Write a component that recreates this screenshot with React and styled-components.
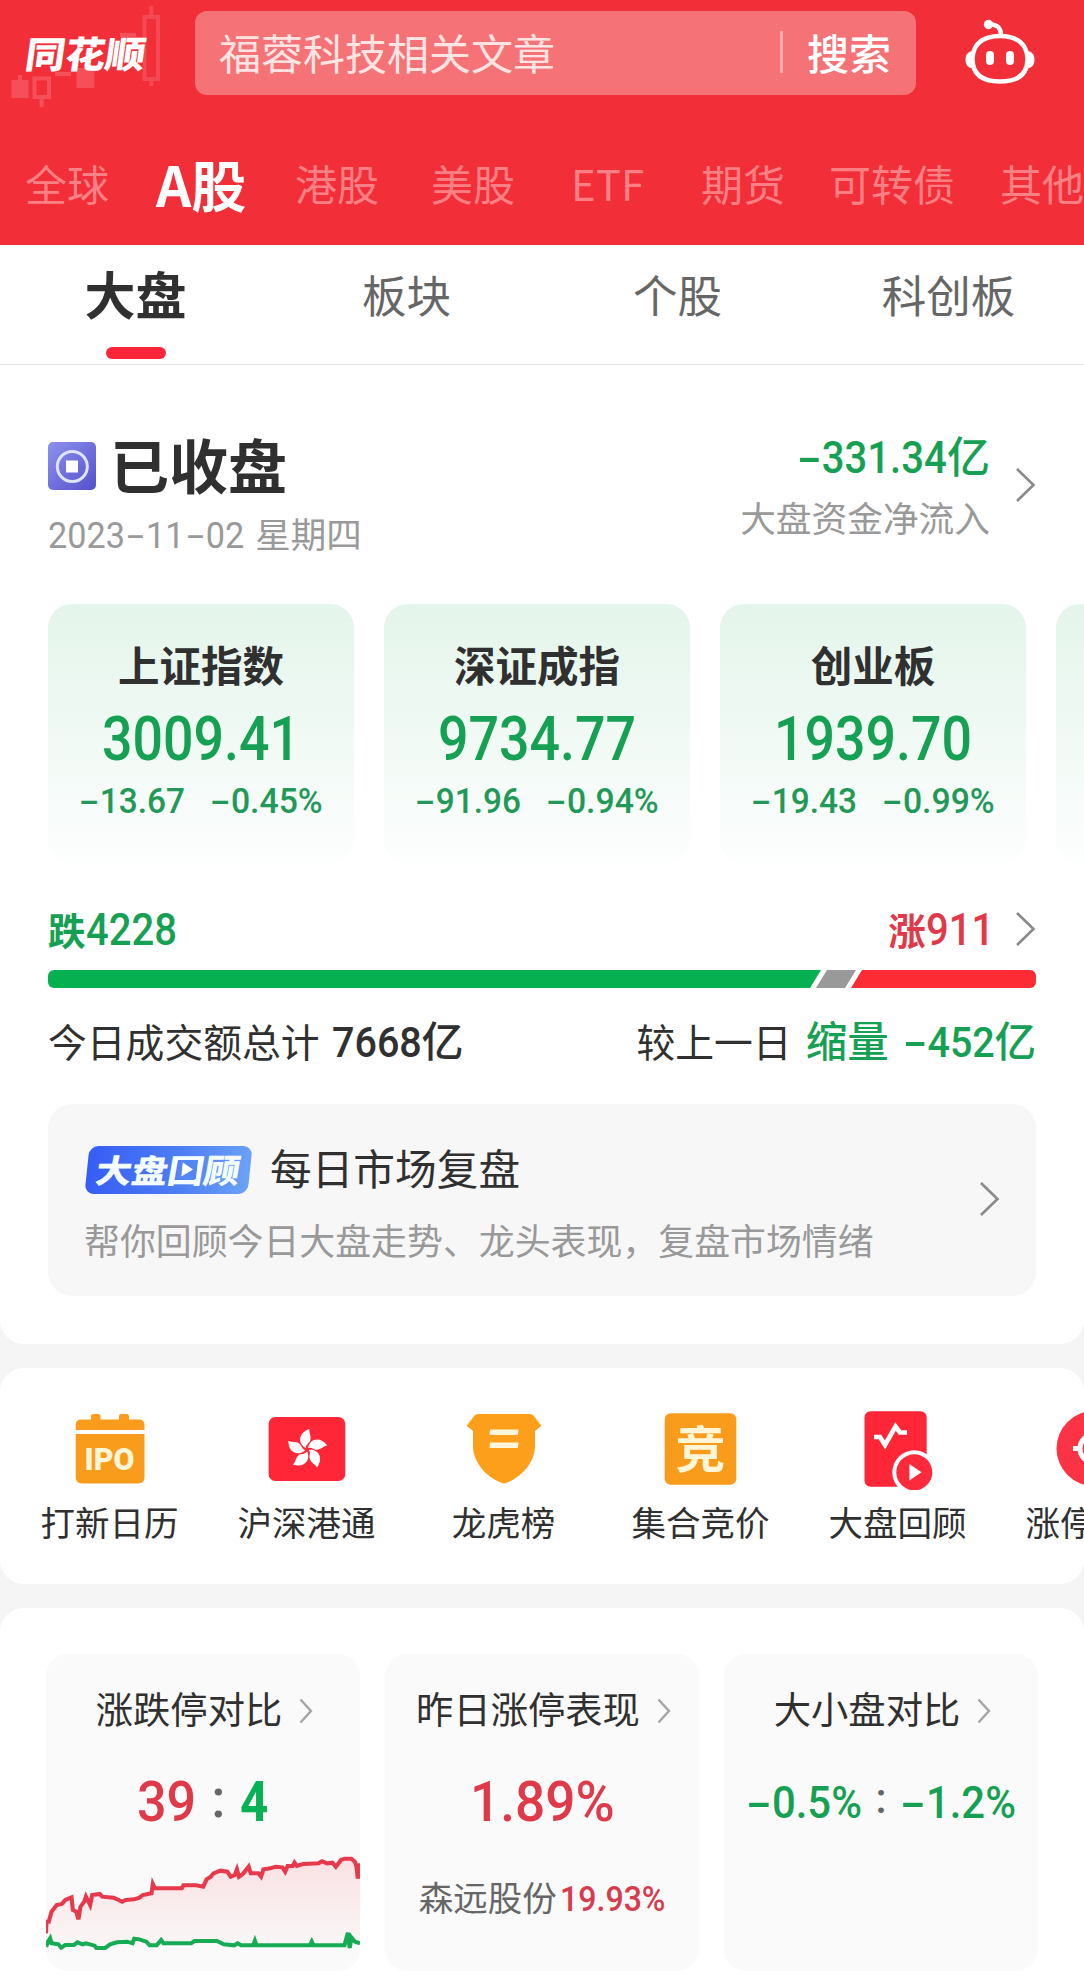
import React from "react";
import styled, { createGlobalStyle } from "styled-components";

const GREEN = "#16a053";
const RED = "#e0394a";

const TABS = [
  { name: "全球", width: 131 },
  { name: "A股", width: 139, active: true },
  { name: "港股", width: 136 },
  { name: "美股", width: 140 },
  { name: "ETF", width: 130 },
  { name: "期货", width: 128 },
  { name: "可转债", width: 171 },
  { name: "其他", width: 90 },
];

const SUB_TABS = ["大盘", "板块", "个股", "科创板"];

const INDEXES = [
  { name: "上证指数", value: "3009.41", diff: "-13.67", rate: "-0.45%" },
  { name: "深证成指", value: "9734.77", diff: "-91.96", rate: "-0.94%" },
  { name: "创业板", value: "1939.70", diff: "-19.43", rate: "-0.99%" },
];

const RISE_LINE =
  "134,1000 135,965 142,965 150,935 160,922 165,915 180,912 190,900 208,892 212,930 222,935 228,958 234,920 245,905 250,890 262,915 268,885 290,882 297,890 330,893 345,900 355,905 365,900 390,898 405,893 415,885 440,880 444,852 450,865 528,865 533,856 570,856 590,860 600,838 612,830 620,820 640,812 660,815 670,830 682,825 688,808 694,830 705,822 722,800 728,820 750,820 758,830 765,808 785,805 800,800 820,802 828,815 835,798 850,798 855,788 862,798 880,792 925,790 935,784 950,790 965,788 975,800 990,780 1000,776 1020,776 1030,785 1035,800 1038,830";
const FALL_LINE =
  "134,1040 140,1025 146,1015 150,1030 170,1033 178,1043 190,1035 215,1035 225,1027 240,1033 250,1030 275,1037 280,1044 305,1044 320,1033 340,1027 370,1025 385,1030 390,1016 405,1018 425,1025 435,1036 455,1036 468,1020 475,1030 555,1030 565,1023 630,1023 650,1033 680,1036 690,1030 700,1036 735,1036 740,1022 745,1036 900,1036 905,1025 910,1036 1000,1036 1010,998 1015,1044 1020,1012 1030,1025 1045,1030";

// advance of each character in em, needed to close the gap left by the squeeze
const ADVANCE = { "-": 0.62, ".": 0.28, "%": 0.73 };

// condensed digits with a long minus sign
function Num({ children, size, color, weight, squeeze = 0.89 }) {
  const chars = children.split("");
  const width = chars.reduce((sum, c) => sum + (ADVANCE[c] || 0.565), 0);
  return (
    <Digits
      $size={size}
      $color={color}
      $weight={weight}
      $squeeze={squeeze}
      $trim={width * (1 - squeeze)}
    >
      {chars.map((c, i) => (c === "-" ? <Minus key={i}>-</Minus> : c))}
    </Digits>
  );
}

function Arrow({ small }) {
  return small ? (
    <svg width="14" height="26" viewBox="0 0 14 26" fill="none">
      <path d="M1.5 1.5 12 13 1.5 24.5" stroke="#a5a5a5" strokeWidth="2.4" />
    </svg>
  ) : (
    <svg width="20" height="34" viewBox="0 0 20 34" fill="none">
      <path d="M1 1 17.5 17 1 33" stroke="#8a8a8a" strokeWidth="2.6" />
    </svg>
  );
}

function Robot() {
  return (
    <svg width="72" height="66" viewBox="0 0 72 66" fill="none">
      <path
        d="M36 17C54 17 63.5 26 63.5 40C63.5 55 54 62.5 36 62.5C18 62.5 8.5 55 8.5 40C8.5 26 18 17 36 17Z"
        stroke="#fff"
        strokeWidth="4.5"
      />
      <path d="M9 32C4.500 32 1.500 35.500 1.500 40.500C1.500 46 4.500 49.500 9 49.500Z" fill="#fff" />
      <path d="M63 32C67.500 32 70.500 35.500 70.500 40.500C70.500 46 67.500 49.500 63 49.500Z" fill="#fff" />
      <circle cx="24.500" cy="5.500" r="4.700" fill="#fff" />
      <path d="M25 5.500C33 5 37 9 37 16" stroke="#fff" strokeWidth="4.500" />
      <rect x="22" y="32" width="8" height="14" rx="4" fill="#fff" />
      <rect x="42" y="32" width="8" height="14" rx="4" fill="#fff" />
    </svg>
  );
}

function Candles() {
  return (
    <CandleSvg width="170" height="112" viewBox="0 0 170 112" fill="none">
      <path d="M11.500 80H28.500V98H11.500ZM18 75H22V81H18Z" fill="#f5505a" />
      <path d="M34.500 78.500H49V97H34.500Z" stroke="#f5505a" strokeWidth="4" />
      <path d="M41.700 98V107" stroke="#f5505a" strokeWidth="4" />
      <path d="M55 72H71V76H55ZM76.500 68H94.500V88H76.500Z" fill="#f5505a" />
      <path d="M144.500 17H158V79H144.500Z" stroke="#f44852" strokeWidth="4" />
      <path d="M151.300 6V16M151.300 80V86" stroke="#f44852" strokeWidth="4" />
      <path d="M120 33H136V37H120Z" fill="#f5505a" />
    </CandleSvg>
  );
}

function IpoIcon() {
  return (
    <svg width="80" height="80" viewBox="0 0 80 80">
      <path
        d="M5.700 20V15Q5.700 9.500 11 9.500H21V6Q21 4 23 4H28Q30.500 4 30.500 6V9.500H49V6Q49 4 51 4H56.500Q59 4 59 6V9.500H69Q74.500 9.500 74.500 15V20Z"
        fill="#fc9c1c"
      />
      <path d="M5.700 24H74.500V67Q74.500 73.500 68 73.500H12Q5.700 73.500 5.700 67Z" fill="#f99c1c" />
      <IconText x="39.600" y="60" fontSize="32" textLength="50" lengthAdjust="spacingAndGlyphs">
        IPO
      </IconText>
    </svg>
  );
}

function FlowerIcon() {
  return (
    <svg width="80" height="80" viewBox="0 0 80 80">
      <rect x="1.600" y="7" width="76.700" height="64" rx="7" fill="#ff2638" />
      {[0, 72, 144, 216, 288].map((deg) => (
        <path
          key={deg}
          d="M38.800 38C31 34 30.500 23 42.500 19C41.500 23 45 26 43 31C41.500 33.500 39 34.500 38.800 38Z"
          fill="#fff"
          transform={`rotate(${deg} 40 39.500)`}
        />
      ))}
    </svg>
  );
}

function ShieldIcon() {
  return (
    <svg width="80" height="80" viewBox="0 0 80 80">
      <path
        d="M14 4H66Q68 4 69.500 5.500L77.300 15.700L71 21V36C71 52 58 67 42 73Q40 73.800 38 73C22 67 9 52 9 36V21L2.700 15.700L10.500 5.500Q12 4 14 4Z"
        fill="#fd9f1b"
      />
      <path d="M26 19.500H54.500L54 25H25.500ZM26 32.500H54.500L54 38H25.500Z" fill="#fff6dc" />
    </svg>
  );
}

function AuctionIcon() {
  return (
    <svg width="80" height="80" viewBox="0 0 80 80">
      <rect x="3.700" y="3.300" width="71.600" height="71.400" rx="6" fill="#f99c1c" />
      <IconText x="39.600" y="57.500" fontSize="50" $weight={700}>
        竞
      </IconText>
    </svg>
  );
}

function ReviewIcon() {
  return (
    <svg width="80" height="80" viewBox="0 0 80 80" fill="none">
      <rect x="6.500" y="1.300" width="62.200" height="75.400" rx="6" fill="#ff2638" />
      <path d="M16 27H22L27 35L37.500 16.500L42 22.500H49" stroke="#fff" strokeWidth="4.600" />
      <circle cx="56.300" cy="62.300" r="22" fill="#fff" />
      <circle cx="56.300" cy="62.300" r="18" fill="#fc2a3b" />
      <path d="M51.400 54L63.500 62.300L51.400 70.500Z" fill="#fff" />
    </svg>
  );
}

function TargetIcon() {
  return (
    <svg width="80" height="80" viewBox="0 0 80 80" fill="none">
      <circle cx="39" cy="38.500" r="37.500" fill="#fc3245" />
      <circle cx="39" cy="38.500" r="14" stroke="#fff" strokeWidth="5" />
      <path d="M18 38.500H26M52 38.500H60" stroke="#fff" strokeWidth="5" />
    </svg>
  );
}

const SHORTCUTS = [
  { name: "打新日历", Icon: IpoIcon },
  { name: "沪深港通", Icon: FlowerIcon },
  { name: "龙虎榜", Icon: ShieldIcon },
  { name: "集合竞价", Icon: AuctionIcon },
  { name: "大盘回顾", Icon: ReviewIcon },
  { name: "涨停", Icon: TargetIcon },
];

function Header() {
  return (
    <Top>
      <Candles />
      <TopRow>
        <Logo>同花顺</Logo>
        <Search>
          <Placeholder>福蓉科技相关文章</Placeholder>
          <SearchButton>搜索</SearchButton>
        </Search>
        <Robot />
      </TopRow>
      <TabRow>
        {TABS.map((t) => (
          <Tab key={t.name} $width={t.width} $active={t.active}>
            {t.name}
          </Tab>
        ))}
      </TabRow>
    </Top>
  );
}

function Overview() {
  return (
    <Market>
      <StatusRow>
        <div>
          <Status>
            <svg width="48" height="48" viewBox="0 0 48 48">
              <defs>
                <linearGradient id="coin" x1="0" y1="0" x2="1" y2="1">
                  <stop offset="0" stopColor="#8e91ee" />
                  <stop offset="1" stopColor="#5450cb" />
                </linearGradient>
              </defs>
              <rect width="48" height="48" rx="5" fill="url(#coin)" />
              <circle cx="24.300" cy="24.500" r="15" fill="none" stroke="#dfe2ff" strokeWidth="3" />
              <rect x="18" y="18.500" width="12" height="12" fill="#fff" />
            </svg>
            <h1>已收盘</h1>
          </Status>
          <DateLine>
            <Num size={36} weight={400} squeeze={0.95}>
              2023-11-02
            </Num>
            <span>星期四</span>
          </DateLine>
        </div>
        <Flow>
          <FlowText>
            <FlowValue>
              <Num size={45}>-331.34</Num>亿
            </FlowValue>
            <p>大盘资金净流入</p>
          </FlowText>
          <Arrow />
        </Flow>
      </StatusRow>

      <IndexRow>
        {INDEXES.map((e) => (
          <IndexCard key={e.name}>
            <h3>{e.name}</h3>
            <IndexValue>
              <Num size={61} squeeze={0.88}>
                {e.value}
              </Num>
            </IndexValue>
            <Change>
              <Num size={35.5} squeeze={0.94}>
                {e.diff}
              </Num>
              <Num size={35.5} squeeze={0.95}>
                {e.rate}
              </Num>
            </Change>
          </IndexCard>
        ))}
        <IndexCard />
      </IndexRow>

      <CountRow>
        <Count $color={GREEN}>
          跌<Num size={45}>4228</Num>
        </Count>
        <CountRight>
          <Count $color={RED}>
            涨<Num size={45}>911</Num>
          </Count>
          <Arrow />
        </CountRight>
      </CountRow>
      <Bar>
        <FallPart />
        <FlatPart />
        <RisePart />
      </Bar>

      <Turnover>
        <div>
          今日成交额总计
          <b>
            <Num size={42} squeeze={0.94}>
              7668
            </Num>
            亿
          </b>
        </div>
        <div>
          较上一日
          <Down>缩量</Down>
          <Down>
            <Num size={42} squeeze={0.94}>
              -452
            </Num>
            亿
          </Down>
        </div>
      </Turnover>

      <ReviewCard>
        <div>
          <ReviewHead>
            <Badge>
              <BadgeText>大盘回顾</BadgeText>
              <Play width="20" height="19" viewBox="0 0 20 19">
                <rect width="20" height="19" fill="#5585f3" />
                <path d="M5 2.500L16 9.500L5 16.500Z" fill="#fff" />
              </Play>
            </Badge>
            <h2>每日市场复盘</h2>
          </ReviewHead>
          <p>帮你回顾今日大盘走势、龙头表现，复盘市场情绪</p>
        </div>
        <Arrow />
      </ReviewCard>
    </Market>
  );
}

function StatCards() {
  return (
    <Stats>
      <StatCard>
        <StatTitle>
          涨跌停对比 <Arrow small />
        </StatTitle>
        <StatValue>
          <Num size={56} color={RED} squeeze={0.93}>
            39
          </Num>
          <Colon $wide>:</Colon>
          <Num size={56} color="#07b255" weight={700} squeeze={0.88}>
            4
          </Num>
        </StatValue>
        <Chart viewBox="134 750 911 315" preserveAspectRatio="none">
          <defs>
            <linearGradient id="rise" x1="0" y1="0" x2="0" y2="1">
              <stop offset="0" stopColor="#ff2638" stopOpacity="0.12" />
              <stop offset="1" stopColor="#ff2638" stopOpacity="0.02" />
            </linearGradient>
          </defs>
          <polygon points={`${RISE_LINE} 1045,830 1045,1032 134,1032`} fill="url(#rise)" />
          <polyline points={`${RISE_LINE} 1040,830 1040,790`} fill="none" stroke="#e63a4c" strokeWidth="12" />
          <polyline points={FALL_LINE} fill="none" stroke="#17ab55" strokeWidth="12" />
        </Chart>
      </StatCard>
      <StatCard>
        <StatTitle>
          昨日涨停表现 <Arrow small />
        </StatTitle>
        <StatValue>
          <Num size={56} color={RED} squeeze={0.95}>
            1.89%
          </Num>
        </StatValue>
        <Stock>
          森远股份
          <Num size={34.5} color="#d63c4e" squeeze={0.93}>
            19.93%
          </Num>
        </Stock>
      </StatCard>
      <StatCard>
        <StatTitle>
          大小盘对比 <Arrow small />
        </StatTitle>
        <StatValue>
          <Num size={45} squeeze={0.93}>
            -0.5%
          </Num>
          <Colon>:</Colon>
          <Num size={45} squeeze={0.93}>
            -1.2%
          </Num>
        </StatValue>
      </StatCard>
    </Stats>
  );
}

export default function App() {
  return (
    <Page>
      <GlobalStyle />
      <Header />
      <SubTabRow>
        {SUB_TABS.map((name, i) => (
          <SubTab key={name} $active={i === 0}>
            {name}
          </SubTab>
        ))}
      </SubTabRow>
      <Overview />
      <Shortcuts>
        {SHORTCUTS.map(({ name, Icon }) => (
          <Shortcut key={name}>
            <Icon />
            <span>{name}</span>
          </Shortcut>
        ))}
      </Shortcuts>
      <StatCards />
    </Page>
  );
}

const GlobalStyle = createGlobalStyle`
  * {
    box-sizing: border-box;
  }
  body {
    margin: 0;
    font-family: "Noto Sans CJK SC", sans-serif;
    color: #303030;
  }
  h1, h2, h3, p {
    margin: 0;
  }
  svg {
    flex-shrink: 0;
    display: block;
  }
`;
const Page = styled.div`
  width: 1084px;
  height: 1985px;
  overflow: hidden;
  background-color: #f5f5f5;
`;
const Digits = styled.span`
  display: inline-block;
  margin-right: -${(p) => p.$trim}em;
  font-family: Roboto, sans-serif;
  font-size: ${(p) => p.$size}px;
  font-weight: ${(p) => p.$weight || 500};
  color: ${(p) => p.$color || "inherit"};
  line-height: 1;
  white-space: pre;
  transform: scaleX(${(p) => p.$squeeze});
  transform-origin: left;
`;
const Minus = styled.span`
  display: inline-block;
  width: 0.62em;
  text-align: center;
  transform: scaleX(1.8);
`;
const Top = styled.header`
  position: relative;
  height: 245px;
  background-color: #f22f38;
  color: white;
`;
const CandleSvg = styled.svg`
  position: absolute;
  left: 0;
  top: 0;
`;
const TopRow = styled.div`
  position: relative;
  display: flex;
  align-items: center;
  height: 106px;
  padding-left: 26px;
  > svg {
    margin-top: -3px;
  }
`;
const Logo = styled.div`
  width: 169px;
  margin-top: -2px;
  font-size: 40px;
  font-weight: 900;
  line-height: 50px;
  transform: skewX(-8deg) scaleY(0.92);
`;
const Search = styled.div`
  display: flex;
  align-items: center;
  width: 721px;
  height: 84px;
  margin-right: 48px;
  padding: 0 25px 3px 24px;
  border-radius: 12px;
  background-color: #f57377;
`;
const Placeholder = styled.div`
  flex: 1;
  font-size: 42px;
  line-height: 50px;
  color: #ffe4e2;
`;
const SearchButton = styled.div`
  padding-left: 24px;
  border-left: 3px solid #fba9aa;
  font-size: 42px;
  font-weight: 500;
  line-height: 42px;
`;
const TabRow = styled.nav`
  display: flex;
  align-items: center;
  height: 154px;
  padding-left: 25px;
`;
const Tab = styled.div`
  flex-shrink: 0;
  width: ${(p) => p.$width}px;
  font-size: ${(p) => (p.$active ? 55 : 42)}px;
  font-weight: ${(p) => (p.$active ? 700 : 400)};
  line-height: 60px;
  color: ${(p) => (p.$active ? "white" : "#fb8085")};
`;
const SubTabRow = styled.nav`
  display: grid;
  grid-template-columns: repeat(4, 271px);
  height: 120px;
  background-color: white;
  border-bottom: 1px solid #e4e4e4;
`;
const SubTab = styled.div`
  display: flex;
  flex-direction: column;
  align-items: center;
  padding-top: ${(p) => (p.$active ? 18 : 19)}px;
  font-size: ${(p) => (p.$active ? 51 : 44.5)}px;
  font-weight: ${(p) => (p.$active ? 700 : 400)};
  line-height: 60px;
  color: ${(p) => (p.$active ? "#303030" : "#666")};
  &::after {
    content: "";
    width: 60px;
    height: 12px;
    margin-top: 24px;
    border-radius: 6px;
    background-color: ${(p) => (p.$active ? "#fb2638" : "transparent")};
  }
`;
const Market = styled.section`
  height: 979px;
  padding: 68px 48px 0;
  overflow: hidden;
  background-color: white;
  border-radius: 0 0 24px 24px;
`;
const StatusRow = styled.div`
  display: flex;
  justify-content: space-between;
  height: 171px;
`;
const Status = styled.div`
  display: flex;
  align-items: center;
  gap: 14px;
  height: 62px;
  svg {
    margin-top: 4px;
  }
  h1 {
    font-size: 59px;
    line-height: 60px;
  }
`;
const DateLine = styled.div`
  display: flex;
  align-items: baseline;
  gap: 11px;
  margin-top: 13px;
  font-size: 35.5px;
  line-height: 50px;
  color: #999;
`;
const Flow = styled.div`
  display: flex;
  gap: 26px;
  svg {
    margin-top: 35px;
  }
`;
const FlowText = styled.div`
  text-align: right;
  p {
    margin-top: 18px;
    font-size: 35.7px;
    line-height: 40px;
    color: #999;
  }
`;
const FlowValue = styled.div`
  height: 50px;
  margin-top: -4px;
  font-size: 43px;
  font-weight: 500;
  line-height: 50px;
  color: ${GREEN};
`;
const IndexRow = styled.div`
  display: flex;
  gap: 30px;
`;
const IndexCard = styled.div`
  flex-shrink: 0;
  display: flex;
  flex-direction: column;
  align-items: center;
  width: 306px;
  height: 260px;
  padding-top: 35px;
  border-radius: 24px;
  background: linear-gradient(#e4f5eb, #fdfefe);
  h3 {
    font-size: 41.5px;
    line-height: 50px;
  }
`;
const IndexValue = styled.div`
  display: flex;
  align-items: center;
  height: 60px;
  margin-top: 20px;
  color: ${GREEN};
`;
const Change = styled.div`
  display: flex;
  align-items: center;
  gap: 25px;
  height: 40px;
  margin-top: 13px;
  color: #239958;
`;
const CountRow = styled.div`
  display: flex;
  justify-content: space-between;
  height: 50px;
  margin-top: 40px;
`;
const CountRight = styled.div`
  display: flex;
  align-items: center;
  gap: 22px;
`;
const Count = styled.div`
  height: 50px;
  font-size: 37.5px;
  font-weight: 700;
  line-height: 50px;
  color: ${(p) => p.$color};
`;
const Bar = styled.div`
  display: flex;
  height: 18px;
  margin-top: 16px;
  border-radius: 6px;
  overflow: hidden;
`;
const FallPart = styled.div`
  width: 773px;
  background-color: #06b050;
  clip-path: polygon(0 0, 100% 0, calc(100% - 11px) 100%, 0 100%);
`;
const FlatPart = styled.div`
  width: 40px;
  margin-left: -5px;
  background-color: #999;
  clip-path: polygon(11px 0, 100% 0, calc(100% - 11px) 100%, 0 100%);
`;
const RisePart = styled.div`
  flex: 1;
  margin-left: -5px;
  background-color: #fd2b34;
  clip-path: polygon(11px 0, 100% 0, 100% 100%, 0 100%);
`;
const Turnover = styled.div`
  display: flex;
  justify-content: space-between;
  height: 50px;
  margin-top: 26px;
  font-size: 38.8px;
  line-height: 50px;
  b {
    margin-left: 12px;
    font-size: 42px;
    font-weight: 500;
  }
`;
const Down = styled.span`
  margin-left: 14px;
  font-size: 41.5px;
  font-weight: 500;
  color: ${GREEN};
`;
const ReviewCard = styled.div`
  display: flex;
  justify-content: space-between;
  height: 192px;
  margin-top: 40px;
  padding: 42px 36px 0 36px;
  border-radius: 24px;
  background-color: #f7f7f7;
  > svg {
    margin-top: 36px;
  }
  p {
    margin-top: 25px;
    font-size: 35.9px;
    line-height: 40px;
    color: #999;
  }
`;
const ReviewHead = styled.div`
  display: flex;
  align-items: center;
  gap: 20px;
  height: 48px;
  h2 {
    font-size: 41.7px;
    font-weight: 400;
    line-height: 48px;
    margin-top: -6px;
  }
`;
const Badge = styled.div`
  position: relative;
  width: 163px;
  height: 48px;
  margin-left: 3px;
  border-radius: 9px;
  background: linear-gradient(90deg, #365df5, #4d7df3 55%, #6ba1f6);
  transform: skewX(-6deg);
  text-align: center;
`;
const BadgeText = styled.div`
  font-size: 36px;
  font-weight: 900;
  line-height: 46px;
  color: #f3fdff;
  transform: skewX(-4deg) scaleY(0.9);
`;
const Play = styled.svg`
  position: absolute;
  left: 90px;
  top: 14px;
`;
const Shortcuts = styled.section`
  display: flex;
  height: 216px;
  margin-top: 24px;
  padding: 42px 0 0 11px;
  overflow: hidden;
  background-color: white;
  border-radius: 24px;
`;
const Shortcut = styled.div`
  flex-shrink: 0;
  display: flex;
  flex-direction: column;
  align-items: center;
  width: 197px;
  span {
    margin-top: 11px;
    font-size: 34.5px;
    line-height: 40px;
  }
  &:last-child span {
    margin-right: 69px;
  }
`;
const IconText = styled.text`
  font-family: Roboto, "Noto Sans CJK SC", sans-serif;
  font-weight: ${(p) => p.$weight || 900};
  text-anchor: middle;
  fill: #fff6d8;
`;
const Stats = styled.section`
  display: flex;
  gap: 25px;
  height: 400px;
  margin-top: 24px;
  padding: 46px 46px 0;
  background-color: white;
  border-radius: 24px 24px 0 0;
`;
const StatCard = styled.div`
  width: 314px;
  flex-shrink: 0;
  height: 317px;
  padding-top: 29px;
  border-radius: 22px;
  background-color: #fafafa;
`;
const StatTitle = styled.div`
  display: flex;
  align-items: center;
  justify-content: center;
  gap: 17px;
  padding-left: 3px;
  font-size: 37.3px;
  line-height: 50px;
  svg {
    margin-top: 6px;
  }
`;
const StatValue = styled.div`
  display: flex;
  align-items: center;
  justify-content: center;
  height: 60px;
  margin-top: 39px;
  color: ${GREEN};
`;
const Colon = styled.span`
  width: ${(p) => (p.$wide ? 44 : 38)}px;
  margin-top: -6px;
  font-family: Roboto, sans-serif;
  font-size: ${(p) => (p.$wide ? 54 : 42)}px;
  font-weight: 500;
  line-height: 52px;
  text-align: center;
  color: #666;
`;
const Chart = styled.svg`
  width: 314px;
  height: 105px;
  margin-top: 18px;
`;
const Stock = styled.div`
  display: flex;
  align-items: baseline;
  justify-content: center;
  gap: 3px;
  height: 40px;
  margin-top: 44px;
  font-size: 34.5px;
  line-height: 40px;
  color: #666;
`;
